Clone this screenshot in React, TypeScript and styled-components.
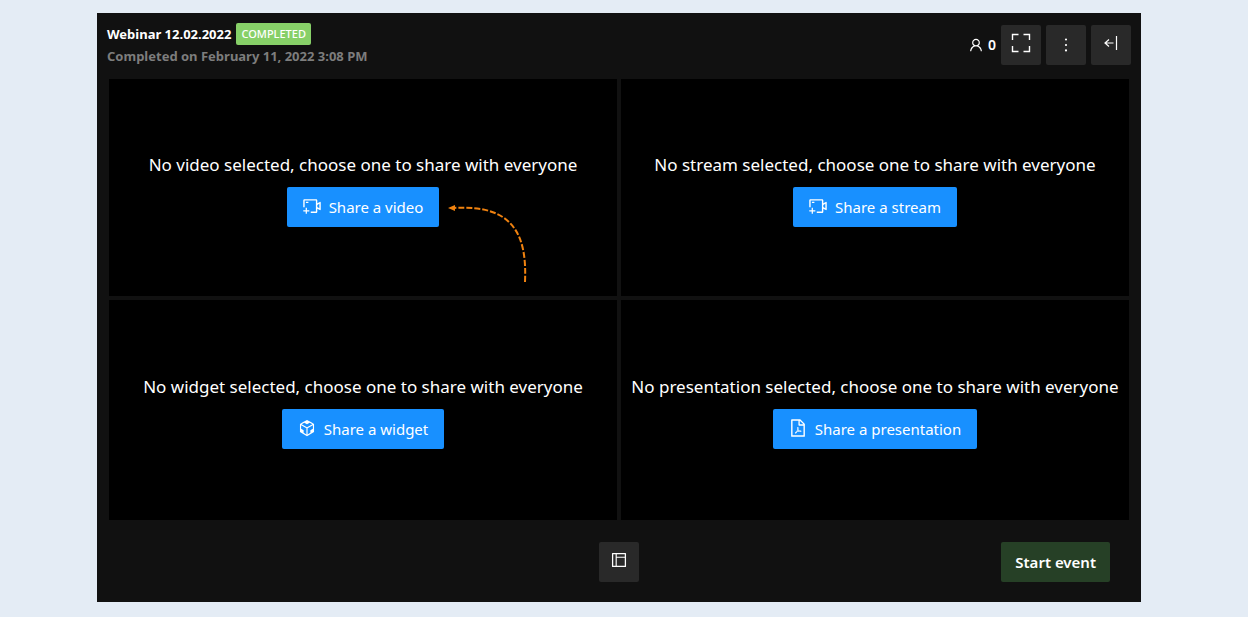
import React from 'react';
import styled, { createGlobalStyle } from 'styled-components';
import {
  AiOutlineCodeSandbox,
  AiOutlineFilePdf,
  AiOutlineLayout,
  AiOutlineMore,
  AiOutlineUser,
  AiOutlineVideoCameraAdd,
} from 'react-icons/ai';

const GlobalStyle = createGlobalStyle`
  * { box-sizing: border-box; }
  body {
    margin: 0;
    background: #e4ecf5;
    color: #fff;
    font-family: 'Segoe UI', 'Noto Sans', 'Open Sans', sans-serif;
  }
  button { font-family: inherit; cursor: pointer; }
`;

const Page = styled.main`
  padding: 13px 107px 15px 97px;
`;

const Room = styled.section`
  background: #111;
`;

const Header = styled.header`
  display: flex;
  justify-content: space-between;
  align-items: flex-start;
  min-height: 66px;
  padding: 10px 10px 0;
`;

const TitleRow = styled.div`
  display: flex;
  align-items: center;
  gap: 5px;
`;

const Title = styled.h1`
  margin: 0;
  font-size: 13px;
  line-height: 22px;
  font-weight: 700;
`;

const Badge = styled.span`
  padding: 0 5px;
  border-radius: 2px;
  background: #87d068;
  font-size: 11px;
  line-height: 22px;
  font-weight: 500;
`;

const Subtitle = styled.p`
  margin: 0;
  color: #7d7d7d;
  font-size: 13px;
  line-height: 22px;
  font-weight: 700;
`;

const Actions = styled.div`
  display: flex;
  align-items: center;
  gap: 5px;
  padding-top: 2px;
`;

const Viewers = styled.span`
  display: flex;
  align-items: center;
  gap: 4px;
  font-size: 14px;
  line-height: 22px;
  font-weight: 600;
`;

const IconButton = styled.button`
  display: flex;
  align-items: center;
  justify-content: center;
  width: 40px;
  height: 40px;
  padding: 0 0 4px;
  border: 0;
  border-radius: 2px;
  background: #292929;
  color: #fff;
`;

const MenuButton = styled(IconButton)`
  padding: 0;
`;

const Stage = styled.div`
  display: grid;
  grid-template-columns: 1fr 1fr;
  grid-template-rows: minmax(217px, auto) minmax(220px, auto);
  gap: 4px;
  padding: 0 12px;
`;

const Panel = styled.section`
  display: flex;
  flex-direction: column;
  align-items: center;
  justify-content: center;
  gap: 5px;
  padding-bottom: 1px;
  background: #000;
`;

const Message = styled.p`
  margin: 0;
  font-size: 17px;
  line-height: 34px;
  text-align: center;
`;

const ShareSlot = styled.div`
  position: relative;
`;

const ShareButton = styled.button`
  display: flex;
  align-items: center;
  gap: 7px;
  height: 40px;
  padding: 0 16px 0 15px;
  border: 0;
  border-radius: 2px;
  background: #1890ff;
  color: #fff;
  font-size: 15px;
  line-height: 24px;

  svg { margin-bottom: 2px; }
`;

const Pointer = styled.svg`
  position: absolute;
  top: 14px;
  left: 100%;
`;

const Footer = styled.footer`
  display: grid;
  grid-template-columns: 1fr auto 1fr;
  align-items: center;
  padding: 22px 31px 20px;
`;

const LayoutButton = styled(IconButton)`
  grid-column: 2;
`;

const StartButton = styled.button`
  justify-self: end;
  height: 40px;
  padding: 0 14px;
  border: 0;
  border-radius: 2px;
  background: #264026;
  color: #fff;
  font-size: 15px;
  font-weight: 600;
`;

const ExpandIcon = () => (
  <svg width="20" height="20" viewBox="0 0 20 20" fill="none" stroke="currentColor" strokeWidth="1.4" aria-hidden="true">
    <path d="M1.5 7V1.5H7.5M12.5 1.5H18.5V7M18.5 13V18.5H12.5M7.5 18.5H1.5V13" />
  </svg>
);

const CollapseIcon = () => (
  <svg width="14" height="14" viewBox="0 0 14 14" fill="none" stroke="currentColor" strokeWidth="1.2" aria-hidden="true">
    <path d="M5 3.5L1 7L5 10.5M1 7H9.5M12.5 0V14" />
  </svg>
);

const PointerArrow = () => (
  <Pointer width="90" height="84" viewBox="0 0 90 84" aria-hidden="true">
    <path d="M86 81C88 36 76 3 15 7" fill="none" stroke="#f0820f" strokeWidth="2" strokeDasharray="6 2" />
    <path d="M9 7L16 4V10Z" fill="#f0820f" />
  </Pointer>
);

const panels = [
  { kind: 'video', Icon: AiOutlineVideoCameraAdd, highlighted: true },
  { kind: 'stream', Icon: AiOutlineVideoCameraAdd, highlighted: false },
  { kind: 'widget', Icon: AiOutlineCodeSandbox, highlighted: false },
  { kind: 'presentation', Icon: AiOutlineFilePdf, highlighted: false },
];

export default function App() {
  return (
    <>
      <GlobalStyle />
      <Page>
        <Room>
          <Header>
            <div>
              <TitleRow>
                <Title>Webinar 12.02.2022</Title>
                <Badge>COMPLETED</Badge>
              </TitleRow>
              <Subtitle>Completed on February 11, 2022 3:08 PM</Subtitle>
            </div>
            <Actions>
              <Viewers>
                <AiOutlineUser size={16} aria-label="Viewers" />0
              </Viewers>
              <IconButton aria-label="Full screen"><ExpandIcon /></IconButton>
              <MenuButton aria-label="More"><AiOutlineMore size={20} /></MenuButton>
              <IconButton aria-label="Collapse sidebar"><CollapseIcon /></IconButton>
            </Actions>
          </Header>
          <Stage>
            {panels.map(({ kind, Icon, highlighted }) => (
              <Panel key={kind}>
                <Message>{`No ${kind} selected, choose one to share with everyone`}</Message>
                <ShareSlot>
                  <ShareButton>
                    <Icon size={20} aria-hidden="true" />
                    {`Share a ${kind}`}
                  </ShareButton>
                  {highlighted && <PointerArrow />}
                </ShareSlot>
              </Panel>
            ))}
          </Stage>
          <Footer>
            <LayoutButton aria-label="Change layout"><AiOutlineLayout size={18} /></LayoutButton>
            <StartButton>Start event</StartButton>
          </Footer>
        </Room>
      </Page>
    </>
  );
}
